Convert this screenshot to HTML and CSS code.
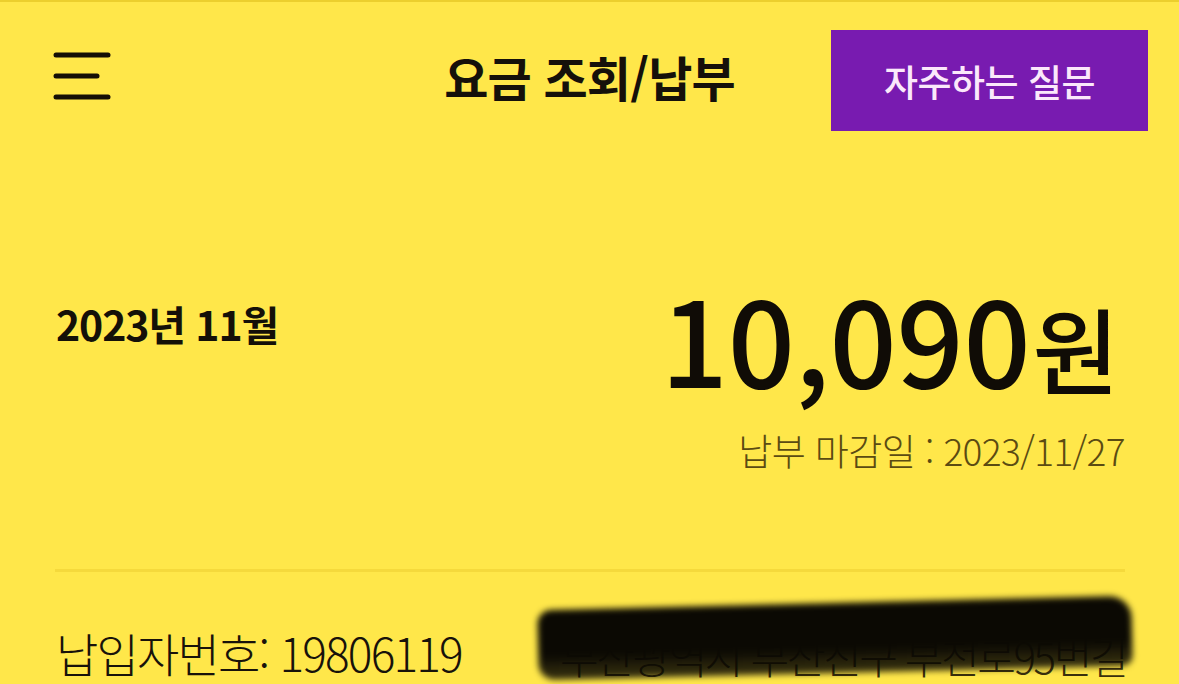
FILE: index.html
```html
<!DOCTYPE html>
<html lang="ko">
<head>
<meta charset="utf-8">
<link rel="stylesheet" href="styles.css">
</head>
<body>
<div class="page">
  <header class="topbar">
    <div class="menu-cell">
      <svg class="menu-icon" width="60" height="50" viewBox="0 0 60 50">
        <line x1="3" y1="4" x2="55" y2="4" />
        <line x1="3" y1="25" x2="44" y2="25" />
        <line x1="3" y1="46" x2="55" y2="46" />
      </svg>
    </div>
    <h1 class="title">요금 조회/납부</h1>
    <div class="btn-cell">
      <button class="faq-btn">자주하는 질문</button>
    </div>
  </header>

  <section class="summary">
    <div class="month">2023년 11월</div>
    <div class="amount-col">
      <div class="amount"><span class="num">10,090</span><span class="won">원</span></div>
      <div class="due">납부 마감일 : 2023/11/27</div>
    </div>
  </section>

  <div class="divider"></div>

  <section class="payer">
    <div class="payer-no">납입자번호: 19806119</div>
    <div class="address-wrap">
      <div class="address">부산광역시 부산진구 부전로95번길</div>
      <div class="redact"></div>
    </div>
  </section>
</div>
</body>
</html>
```

FILE: styles.css
```css
* { box-sizing: border-box; }
html, body {
  margin: 0;
  padding: 0;
  background: #ffe74a;
}
body {
  font-family: "Noto Sans CJK KR", "Noto Sans", sans-serif;
  color: #141008;
  width: 1179px;
  height: 684px;
  overflow: hidden;
}
.page {
  border-top: 2px solid #eccf2e;
  height: 684px;
}
.topbar {
  display: grid;
  grid-template-columns: 1fr auto 1fr;
  align-items: center;
  padding-top: 28px;
}
.menu-cell {
  align-self: start;
  padding-left: 53px;
  padding-top: 21px;
  display: flex;
}
.menu-icon line {
  stroke: #150f05;
  stroke-width: 5;
  stroke-linecap: round;
}
.title {
  margin: 0 0 10px 0;
  font-size: 48px;
  font-weight: 700;
  letter-spacing: -0.8px;
  line-height: 1;
  color: #15100a;
}
.btn-cell {
  display: flex;
  justify-content: flex-end;
  padding-right: 31px;
}
.faq-btn {
  width: 317px;
  height: 101px;
  border: none;
  background: #781bb0;
  color: #fbe8fb;
  font-family: inherit;
  font-size: 37px;
  font-weight: 500;
  letter-spacing: -0.5px;
  padding: 0;
}
.summary {
  display: flex;
  justify-content: space-between;
  align-items: flex-start;
  padding: 147px 54px 0 56px;
}
.month {
  font-size: 41px;
  font-weight: 700;
  letter-spacing: -1.1px;
  line-height: 1;
  margin-top: 25px;
}
.amount-col {
  display: flex;
  flex-direction: column;
  align-items: flex-end;
}
.amount {
  display: flex;
  align-items: baseline;
  line-height: 1;
  color: #100c06;
}
.num {
  font-size: 118px;
  font-weight: 500;
  letter-spacing: -0.3px;
}
.won {
  font-size: 94px;
  font-weight: 500;
  margin-left: 2px;
  margin-right: 6px;
}
.due {
  font-size: 37px;
  font-weight: 300;
  letter-spacing: -0.6px;
  color: #5b4b12;
  margin-top: 36px;
  line-height: 1;
}
.divider {
  height: 3px;
  background: #f5d93c;
  margin: 100px 54px 0 55px;
}
.payer {
  display: flex;
  align-items: flex-start;
  padding: 57px 0 0 56px;
}
.payer-no {
  font-size: 46px;
  font-weight: 300;
  letter-spacing: -1.8px;
  line-height: 1;
  color: #18120a;
}
.address-wrap {
  position: relative;
  margin-left: 98px;
}
.address {
  font-size: 42px;
  font-weight: 300;
  letter-spacing: -2.4px;
  line-height: 1;
  color: #3a300c;
  padding-top: 6px;
}
.redact {
  position: absolute;
  left: -22px;
  top: -26px;
  width: 594px;
  height: 70px;
  background: linear-gradient(180deg, #0b0903 0%, #0b0903 65%, rgba(11,9,3,0.8) 100%);
  border-radius: 14px 22px 10px 16px;
  filter: blur(3px);
  transform: rotate(-1.4deg);
}
```
